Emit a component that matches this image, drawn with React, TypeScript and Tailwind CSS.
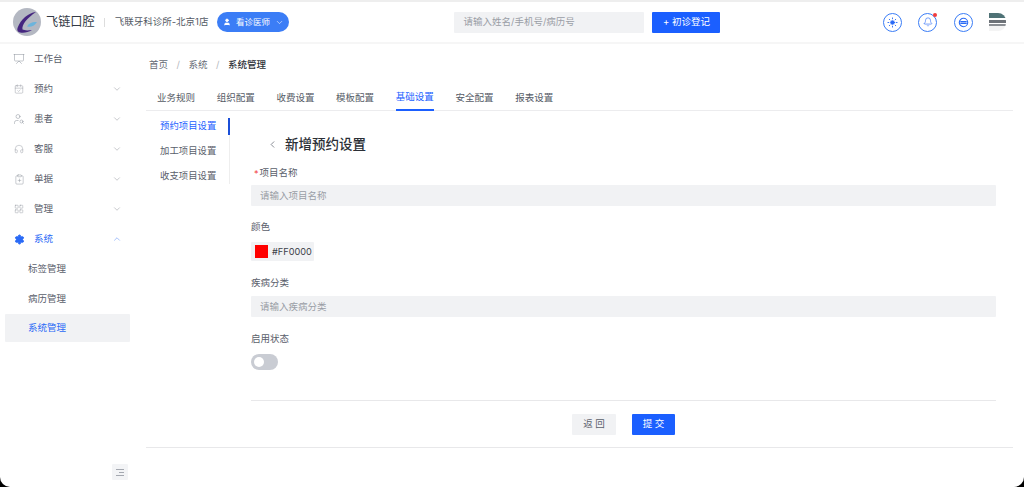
import { ChevronDown, ChevronLeft, ChevronUp, Presentation, CalendarCheck, UserSearch, Headphones, ClipboardPlus, LayoutGrid, Settings, User, Sun, Bell } from 'lucide-react';
import type { ComponentType } from 'react';

const FONT = 'font-["Inter","Noto_Sans_CJK_SC",sans-serif]';

type IconType = ComponentType<{ size?: number; strokeWidth?: number; className?: string }>;

interface NavItem {
  label: string;
  icon: IconType;
  size: number;
  arrow?: boolean;
}

const NAV: NavItem[] = [
  { label: '工作台', icon: Presentation, size: 12 },
  { label: '预约', icon: CalendarCheck, size: 10, arrow: true },
  { label: '患者', icon: UserSearch, size: 12, arrow: true },
  { label: '客服', icon: Headphones, size: 10, arrow: true },
  { label: '单据', icon: ClipboardPlus, size: 11, arrow: true },
  { label: '管理', icon: LayoutGrid, size: 10, arrow: true },
];

const TABS = ['业务规则', '组织配置', '收费设置', '模板配置', '基础设置', '安全配置', '报表设置'];

function Logo() {
  return (
    <svg width="28" height="28" viewBox="0 0 28 28" className="shrink-0">
      <circle cx="14" cy="14" r="14" fill="#b4b8c2" />
      <path d="M23 4C15 5 8 11 4.500 20c-.8 2.400.4 4 2.500 4.400 3.500.6 8 .2 12-2.400-4 .6-7.500.6-9.500-.4C8.500 17 14 10 23 4z" fill="#45267f" />
      <path d="M24 14c-4.500-.6-8 1-10 4.400 3.500.8 7 .2 10-4.400z" fill="#6cb4dc" />
    </svg>
  );
}

function TopBar() {
  return (
    <header className="flex h-[44px] shrink-0 items-center border-y-2 border-t-[#eeeeee] border-b-[#f6f6f6] bg-white pl-[13px] pr-[18px]">
      <Logo />
      <span className="ml-[5px] text-[12.2px] text-[#333a45]">飞链口腔</span>
      <span className="ml-[9px] h-[9px] w-px bg-[#dddddd]" />
      <span className="ml-[10px] text-[9.5px] text-[#555b66]">飞联牙科诊所-北京1店</span>
      <button className="ml-[9px] flex h-5 w-[72px] items-center justify-center gap-[5px] rounded-full bg-[#3b7df6] text-[8.5px] text-white">
        <User size={8} fill="white" strokeWidth={2} />
        看诊医师
        <ChevronDown size={9} strokeWidth={1.5} />
      </button>
      <div className="ml-[165px] flex h-[21px] w-[190px] items-center rounded-[1px] bg-[#f1f2f4] pl-[9px] text-[9.5px] text-[#9a9ea6]">
        请输入姓名/手机号/病历号
      </div>
      <button className="ml-2 h-[21px] w-[68px] rounded-[1px] bg-[#1b5fff] text-[9.5px] text-white">+ 初诊登记</button>
      <div className="ml-auto flex items-center gap-[16.500px]">
        <span className="flex h-[19px] w-[19px] items-center justify-center rounded-full border border-[#3b7df6] text-[#2a6af6]">
          <Sun size={11} strokeWidth={2} className="fill-[#2a6af6]" />
        </span>
        <span className="relative flex h-[19px] w-[19px] items-center justify-center rounded-full border border-[#3b7df6] text-[#2a6af6]">
          <Bell size={10} strokeWidth={1.5} />
          <span className="absolute -right-px -top-px h-1 w-1 rounded-full bg-[#f23c3c]" />
        </span>
        <span className="flex h-[19px] w-[19px] items-center justify-center rounded-full border border-[#3b7df6] text-[#2a6af6]">
          <svg width="11" height="11" viewBox="0 0 12 12" fill="none" stroke="currentColor" strokeWidth="1.2">
            <circle cx="6" cy="6" r="4.600" />
            <path d="M2.500 5h7M2.500 7h7" />
          </svg>
        </span>
        <span className="flex h-[18px] w-[17px] flex-col overflow-hidden rounded-tr-[8px] rounded-br-[8px]">
          <span className="h-[5px] bg-[#4f7276]" />
          <span className="h-[2px] bg-white" />
          <span className="h-[3px] bg-[#6d7278]" />
          <span className="h-[1px] bg-white" />
          <span className="h-[2px] bg-[#8b8f94]" />
          <span className="h-[5px] bg-[#f4f4f4]" />
        </span>
      </div>
    </header>
  );
}

function Sidebar() {
  return (
    <aside className="flex w-[146px] shrink-0 flex-col">
      {NAV.map((item) => (
        <div key={item.label} className="flex h-[30px] items-center pl-[13px] pr-[24px] text-[9.5px] text-[#5a606b]">
          <span className="flex w-[12px] justify-center">
            <item.icon size={item.size} strokeWidth={1} className="text-[#8b909a]" />
          </span>
          <span className="ml-[9px]">{item.label}</span>
          {item.arrow && <ChevronDown size={10} strokeWidth={1} className="ml-auto text-[#777c85]" />}
        </div>
      ))}
      <div className="flex h-[30px] items-center pl-[13px] pr-[24px] text-[9.5px] text-[#2a6af6]">
        <span className="flex w-[12px] justify-center">
          <Settings size={11} strokeWidth={2} className="fill-[#2a6af6]" />
        </span>
        <span className="ml-[9px]">系统</span>
        <ChevronUp size={10} strokeWidth={1} className="ml-auto" />
      </div>
      <div className="flex h-[30px] items-center pl-[28px] text-[9.5px] text-[#5a606b]">标签管理</div>
      <div className="flex h-[30px] items-center pl-[28px] text-[9.5px] text-[#5a606b]">病历管理</div>
      <div className="ml-[5px] mr-4 flex h-[28px] items-center rounded-[1px] bg-[#f1f2f4] pl-[23px] text-[9.5px] text-[#2a6af6]">系统管理</div>
      <div className="mr-[18px] mt-auto mb-[7px] flex h-4 w-4 items-center justify-center self-end rounded-[1px] bg-[#f3f4f6]">
        <span className="flex w-[8px] flex-col gap-[2px]">
          <span className="h-px bg-[#a4a8b0]" />
          <span className="ml-[3px] h-px bg-[#a4a8b0]" />
          <span className="h-px bg-[#a4a8b0]" />
        </span>
      </div>
    </aside>
  );
}

function Tabs() {
  return (
    <div className="flex h-[27px] gap-[21.700px] border-b border-[#ececee] pl-[11px] pr-0">
      {TABS.map((t) => (
        <div
          key={t}
          className={
            t === '基础设置'
              ? 'flex h-[27px] items-center border-b-2 border-[#1b5fff] pt-[1px] text-[9.5px] text-[#1b5fff]'
              : 'flex h-[27px] items-center pt-[1px] text-[9.5px] text-[#555b66]'
          }
        >
          {t}
        </div>
      ))}
    </div>
  );
}

function SubNav() {
  return (
    <div className="mt-[7px] flex h-[66px] w-[84px] shrink-0 flex-col border-r border-[#eeeeee] pl-[14px] text-[9.4px] text-[#5a606b]">
      <div className="relative flex h-[17px] items-center text-[#1b5fff]">
        预约项目设置
        <span className="absolute -right-px top-0 h-[17px] w-[2px] bg-[#1b4fd8]" />
      </div>
      <div className="mt-[8px] flex h-[17px] items-center">加工项目设置</div>
      <div className="mt-[8px] flex h-[17px] items-center">收支项目设置</div>
    </div>
  );
}

function Label({ children, required }: { children: string; required?: boolean }) {
  return (
    <div className="flex h-[14px] items-center text-[9.5px] text-[#5a606b]">
      {required && <span className="ml-[3px] mr-[1px] text-[9px] leading-none text-[#f23c3c]">*</span>}
      {children}
    </div>
  );
}

function Field({ placeholder }: { placeholder: string }) {
  return (
    <div className="mt-[6px] flex h-[21px] items-center rounded-[1px] bg-[#f1f2f4] pl-[9px] pt-[1px] text-[9.5px] text-[#9a9ea6]">
      {placeholder}
    </div>
  );
}

function Form() {
  return (
    <div className="ml-[21px] flex w-[745px] flex-col">
      <div className="mt-[23px] flex h-[20px] items-center pl-4">
        <ChevronLeft size={11} strokeWidth={1.5} className="text-[#555b66]" />
        <span className="ml-[7px] text-[13.500px] font-medium text-[#2b2f36]">新增预约设置</span>
      </div>
      <div className="mt-[12px] -mb-px">
        <Label required>项目名称</Label>
      </div>
      <Field placeholder="请输入项目名称" />
      <div className="mt-[14px]">
        <Label>颜色</Label>
      </div>
      <div className="mt-[8px] flex h-[19px] w-[63px] items-center rounded-[1px] bg-[#f1f2f4] pl-1">
        <span className="h-[13px] w-[13px] bg-[#ff0000]" />
        <span className="ml-1 pt-[1px] text-[9.2px] text-[#3c4048]">#FF0000</span>
      </div>
      <div className="mt-[15px]">
        <Label>疾病分类</Label>
      </div>
      <Field placeholder="请输入疾病分类" />
      <div className="mt-[15px]">
        <Label>启用状态</Label>
      </div>
      <div className="mt-[8px] flex h-4 w-[27px] items-center rounded-full bg-[#c9ccd3] pl-[3px]">
        <span className="h-[10px] w-[10px] rounded-full bg-white" />
      </div>
      <div className="mt-[30px] border-t border-[#e8e8ea]" />
      <div className="mt-[13px] flex justify-center gap-4">
        <button className="h-[21px] w-11 rounded-[1px] bg-[#f1f2f4] text-[9.5px] text-[#5a606b]">返 回</button>
        <button className="h-[21px] w-[43px] rounded-[1px] bg-[#1b5fff] text-[9.5px] text-white">提 交</button>
      </div>
    </div>
  );
}

export default function App() {
  return (
    <div className={`h-[487px] w-[1024px] overflow-hidden bg-black ${FONT}`}>
      <div className="flex h-full flex-col overflow-hidden rounded-b-[10px] bg-white">
        <TopBar />
        <div className="flex min-h-0 flex-1">
          <Sidebar />
          <main className="flex min-w-0 flex-1 flex-col pr-[11px]">
            <div className="mt-[14px] flex h-[14px] items-center text-[9.5px] text-[#666b75]">
              <span className="ml-[3px]">首页</span>
              <span className="mx-[8.500px] text-[#b5b8be]">/</span>
              <span>系统</span>
              <span className="mx-[8.500px] text-[#b5b8be]">/</span>
              <span className="font-medium text-[#2b2f36]">系统管理</span>
            </div>
            <div className="mt-[12px]">
              <Tabs />
            </div>
            <div className="flex">
              <SubNav />
              <Form />
            </div>
            <div className="mt-[12px] border-t border-[#e8e8ea]" />
          </main>
        </div>
      </div>
    </div>
  );
}
